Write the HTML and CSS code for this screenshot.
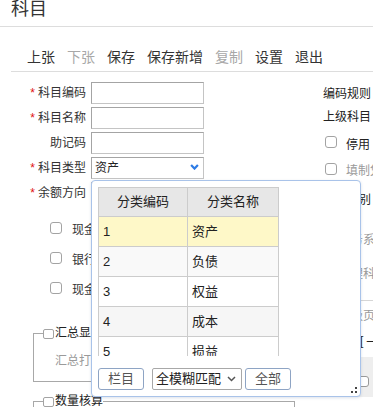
FILE: index.html
```html
<!DOCTYPE html>
<html lang="zh-CN">
<head>
<meta charset="utf-8">
<title>科目</title>
<link rel="stylesheet" href="styles.css">
</head>
<body>
<div class="page">
  <div class="title">科目</div>
  <div class="toolbar">
    <span>上张</span><span class="dis">下张</span><span>保存</span><span>保存新增</span><span class="dis">复制</span><span>设置</span><span>退出</span>
  </div>
  <div class="form">
    <div class="left">
      <div class="row"><label class="lbl"><span class="req">*</span>科目编码</label><span class="inp"></span></div>
      <div class="row"><label class="lbl"><span class="req">*</span>科目名称</label><span class="inp"></span></div>
      <div class="row"><label class="lbl">助记码</label><span class="inp"></span></div>
      <div class="row"><label class="lbl"><span class="req">*</span>科目类型</label><span class="inp sel"><span>资产</span><svg class="chev" width="9" height="6" viewBox="0 0 9 6"><polyline points="1.1,1.1 4.5,4.6 7.9,1.1" fill="none" stroke="#2d7be5" stroke-width="2.2" stroke-linejoin="miter"/></svg></span></div>
      <div class="row"><label class="lbl"><span class="req">*</span>余额方向</label><span class="inp sel"><span>借</span></span></div>
      <div class="checks">
        <div class="chk"><span class="box"></span>现金科目</div>
        <div class="chk"><span class="box"></span>银行科目</div>
        <div class="chk"><span class="box"></span>现金等价物</div>
      </div>
      <fieldset class="fs">
        <legend><span class="box sm"></span>汇总显示</legend>
        <div class="fs-body">汇总打印</div>
      </fieldset>
      <fieldset class="fs fs2">
        <legend><span class="box sm"></span>数量核算</legend>
        <div class="fs-body">计量单位</div>
      </fieldset>
    </div>
    <div class="right">
      <div class="r r1">编码规则</div>
      <div class="r r2">上级科目</div>
      <div class="r r3"><span class="box"></span>停用</div>
      <div class="r r4 gray"><span class="box"></span>填制凭证</div>
      <div class="r r5">科目类别</div>
      <div class="r r6 gray ind">业务系统</div>
      <div class="r r7 gray ind">管理科目</div>
      <div class="rline"></div>
      <div class="r r8 gray ind">末级页签</div>
      <div class="r r9"><span class="brk">[ —</span></div>
      <div class="graybox"><span class="gbtn"></span></div>
    </div>
  </div>

  <div class="popup">
    <div class="tbl-wrap">
      <div class="tbl">
        <div class="tr head"><div>分类编码</div><div>分类名称</div></div>
        <div class="tr sel-row"><div>1</div><div>资产</div></div>
        <div class="tr alt"><div>2</div><div>负债</div></div>
        <div class="tr"><div>3</div><div>权益</div></div>
        <div class="tr alt2"><div>4</div><div>成本</div></div>
        <div class="tr"><div>5</div><div>损益</div></div>
      </div>
    </div>
    <div class="pfoot">
      <span class="btn">栏目</span>
      <span class="psel"><span>全模糊匹配</span><svg width="9" height="6" viewBox="0 0 9 6"><polyline points="1,1 4.5,4.5 8,1" fill="none" stroke="#555" stroke-width="1.5"/></svg></span>
      <span class="btn b2">全部</span>
    </div>
    <svg class="grip" width="8" height="8" viewBox="0 0 8 8"><rect x="5" y="1" width="2" height="2" fill="#444"/><rect x="1" y="5" width="2" height="2" fill="#444"/><rect x="5" y="5" width="2" height="2" fill="#444"/></svg>
  </div>
</div>
</body>
</html>
```

FILE: styles.css
```css
* { box-sizing: border-box; }
html, body { margin: 0; padding: 0; background: #fff; }
body {
  font-family: "Liberation Sans", "Noto Sans CJK SC", sans-serif;
  font-size: 12px;
  color: #333;
  overflow: hidden;
}
.page {
  position: relative;
  width: 373px;
  height: 407px;
  overflow: hidden;
}
.title {
  height: 27px;
  border-bottom: 1px solid #dddddd;
  padding-left: 11px;
  font-size: 18px;
  line-height: 18px;
  color: #333;
}
.toolbar {
  margin-left: 11px;
  height: 45px;
  border-bottom: 1px solid #dddddd;
  padding: 20px 0 0 16px;
  display: flex;
  gap: 12px;
  font-size: 14px;
  line-height: 21px;
  color: #333;
}
.toolbar .dis { color: #a8a8a8; }

.form {
  display: flex;
  width: 600px;
}
.left {
  width: 323px;
  flex: none;
  padding-top: 10px;
}
.row {
  display: flex;
  height: 22px;
  margin-bottom: 3px;
}
.lbl {
  width: 91px;
  padding-right: 5px;
  text-align: right;
  line-height: 22px;
  color: #333;
}
.req {
  color: #e01010;
  margin-right: 3px;
}
.inp {
  width: 113px;
  height: 22px;
  border: 1px solid #a4a4a4;
  border-right-color: #c4c4c4;
  border-bottom-color: #c4c4c4;
  background: #fff;
}
.sel {
  display: flex;
  align-items: center;
  justify-content: space-between;
  padding: 0 4px 0 3px;
  line-height: 20px;
  color: #222;
}
.sel .chev { margin-bottom: 2px; }

.checks {
  padding-top: 8px;
  padding-left: 50px;
}
.chk {
  display: flex;
  align-items: center;
  height: 30px;
  line-height: 30px;
  color: #333;
}
.box {
  display: inline-block;
  flex: none;
  width: 12px;
  height: 12px;
  border: 1px solid #a3a3a3;
  border-radius: 3px;
  background: #fff;
}
.chk .box {
  margin-right: 10px;
  margin-bottom: 5px;
}

.fs {
  margin: 22px 0 0 33px;
  width: 262px;
  border: 1px solid #a8a8a8;
  padding: 0 0 0 9px;
  min-width: 0;
}
.fs legend {
  display: flex;
  align-items: center;
  height: 13px;
  line-height: 13px;
  padding: 0;
  margin: 0;
  color: #222;
}
.box.sm {
  width: 11px;
  height: 10px;
  border-radius: 2px;
  margin-right: 1px;
}
.fs-body {
  padding: 13px 0 12px 12px;
  line-height: 16px;
  color: #9a9a9a;
}
.fs2 { margin-top: 13px; }

.right {
  width: 220px;
  flex: none;
  padding-top: 10px;
}
.r {
  display: flex;
  align-items: center;
  color: #222;
}
.r1 { height: 24px; line-height: 24px; }
.r2 { height: 22px; line-height: 22px; }
.r3 { height: 34px; line-height: 34px; padding-left: 2px; }
.r3 .box { width: 12px; height: 12px; margin-right: 9px; margin-bottom: 7px; }
.r4 { height: 18px; line-height: 18px; padding-left: 2px; }
.r4 .box { width: 12px; height: 12px; margin-right: 9px; margin-bottom: 5px; }
.r5 { height: 41px; line-height: 41px; }
.r6 { height: 38px; line-height: 38px; }
.r7 { height: 30px; line-height: 30px; }
.r8 { height: 31px; line-height: 31px; }
.r9 { height: 19px; line-height: 19px; padding-left: 37px; }
.gray { color: #9a9a9a; }
.ind { padding-left: 16px; }
.rline {
  margin-top: 11px;
  height: 1px;
  border-top: 1px solid #d6d6d6;
}
.graybox {
  margin-top: 6px;
  height: 40px;
  background: #eeeeee;
  padding: 19px 0 0 6px;
}
.gbtn {
  display: block;
  width: 40px;
  height: 11px;
  border: 1px solid #999;
  border-radius: 3px;
  background: #fff;
}

.popup {
  position: absolute;
  left: 91px;
  top: 180px;
  width: 270px;
  height: 217px;
  border: 1px solid #a9c3e9;
  border-radius: 4px;
  background: #fff;
  box-shadow: 0 1px 3px rgba(60, 90, 140, 0.18);
  padding: 6px;
}
.tbl-wrap {
  width: 181px;
  height: 169px;
  overflow: hidden;
}
.tbl {
  width: 181px;
  border-left: 1px solid #cccccc;
  border-top: 1px solid #cccccc;
  font-size: 13px;
  color: #222;
}
.tr {
  display: grid;
  grid-template-columns: 89px 91px;
}
.tr > div {
  height: 30px;
  line-height: 29px;
  padding-left: 4px;
  border-right: 1px solid #cccccc;
  border-bottom: 1px solid #cccccc;
}
.tr.head > div {
  height: 29px;
  line-height: 28px;
  padding-left: 0;
  text-align: center;
  background: #e7e7e7;
}
.tr.sel-row > div { background: #fef8c8; }
.tr.alt > div { background: #f9f9f9; }
.tr.alt2 > div { background: #f6f6f6; }

.pfoot {
  margin-top: 12px;
  display: flex;
  font-size: 13px;
}
.btn {
  width: 46px;
  height: 22px;
  border: 1px solid #8ea4c4;
  border-radius: 3px;
  text-align: center;
  line-height: 20px;
  color: #555;
  background: #fff;
}
.psel {
  margin-left: 8px;
  width: 90px;
  height: 22px;
  border: 1px solid #a8a8a8;
  border-radius: 2px;
  display: flex;
  align-items: center;
  justify-content: space-between;
  padding: 0 5px 0 3px;
  line-height: 20px;
  color: #222;
}
.b2 { margin-left: 3px; }
.grip {
  position: absolute;
  right: 2px;
  bottom: 2px;
}
```
